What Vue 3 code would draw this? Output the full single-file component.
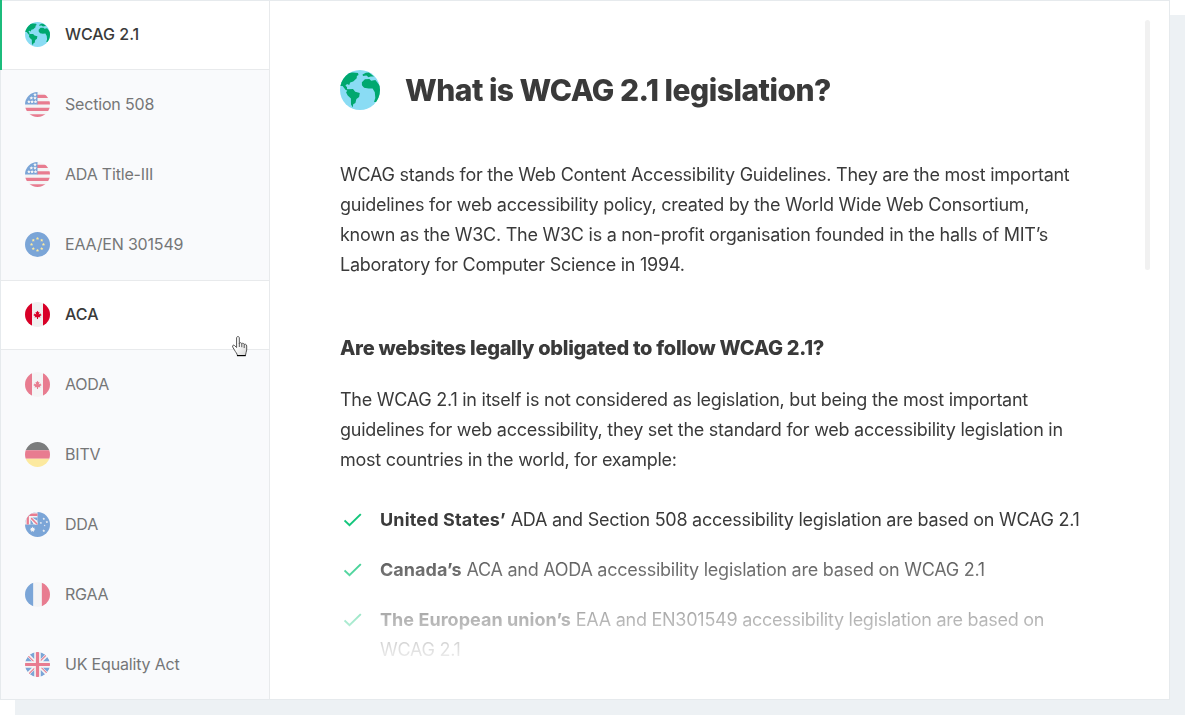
<script setup>
const items = [
  { label: 'WCAG 2.1', flag: 'globe', state: 'active' },
  { label: 'Section 508', flag: 'us' },
  { label: 'ADA Title-III', flag: 'us' },
  { label: 'EAA/EN 301549', flag: 'eu' },
  { label: 'ACA', flag: 'ca', state: 'hover' },
  { label: 'AODA', flag: 'ca' },
  { label: 'BITV', flag: 'de' },
  { label: 'DDA', flag: 'au' },
  { label: 'RGAA', flag: 'fr' },
  { label: 'UK Equality Act', flag: 'uk' }
]

const examples = [
  { who: 'United States’', text: 'ADA and Section 508 accessibility legislation are based on WCAG 2.1' },
  { who: 'Canada’s', text: 'ACA and AODA accessibility legislation are based on WCAG 2.1' },
  { who: 'The European union’s', text: 'EAA and EN301549 accessibility legislation are based on WCAG 2.1' }
]

const euStars = Array.from({ length: 8 }, (_, i) => [
  256 + 122 * Math.sin((i * Math.PI) / 4),
  256 - 122 * Math.cos((i * Math.PI) / 4)
])
const usStars = [[205, 55], [130, 125], [205, 125], [80, 200], [145, 200], [215, 200]]
const auStars = [[384, 140, 28], [325, 225, 26], [448, 205, 28], [402, 278, 20], [384, 385, 30]]

function star(cx, cy, r) {
  return Array.from({ length: 10 }, (_, i) => {
    const d = i % 2 ? r * 0.5 : r
    return `${cx + d * Math.sin((i * Math.PI) / 5)},${cy - d * Math.cos((i * Math.PI) / 5)}`
  }).join(' ')
}
</script>

<template>
  <div class="stage">
    <div class="card">
      <nav class="sidebar">
        <a v-for="item in items" :key="item.label" class="item" :class="item.state">
          <svg class="flag" viewBox="0 0 512 512">
            <use v-if="item.flag === 'globe'" href="#globe" />
            <g v-else-if="item.flag === 'us'">
              <path fill="#f0f0f0" d="M0 0h512v512H0z" />
              <path fill="#d80027" d="M244 55h268v67H244zM244 189h268v67H244zM0 323h512v67H0zM0 456h512v56H0z" />
              <path fill="#0052b4" d="M0 0h256v256H0z" />
              <polygon v-for="s in usStars" :key="s.join()" fill="#f0f0f0" :points="star(s[0], s[1], 38)" />
            </g>
            <g v-else-if="item.flag === 'eu'">
              <path fill="#0052b4" d="M0 0h512v512H0z" />
              <polygon v-for="s in euStars" :key="s.join()" fill="#ffda44" :points="star(s[0], s[1], 34)" />
            </g>
            <g v-else-if="item.flag === 'ca'">
              <path fill="#f0f0f0" d="M0 0h512v512H0z" />
              <path fill="#d80027" d="M0 0h144v512H0zM368 0h144v512H368zM301 290l44-23-22-11v-22l-45 22 22-45h-22l-22-33-22 33h-23l23 45-45-22v22l-22 11 44 23-22 22h56v34h22v-34h56z" />
            </g>
            <g v-else-if="item.flag === 'de'">
              <path d="M0 0h512v167H0z" />
              <path fill="#d80027" d="M0 167h512v178H0z" />
              <path fill="#ffda44" d="M0 345h512v167H0z" />
            </g>
            <g v-else-if="item.flag === 'au'">
              <path fill="#0052b4" d="M0 0h512v512H0z" />
              <path fill="#f0f0f0" d="M0 0h256v256H0z" />
              <path fill="#d80027" d="M33 33h223v47H80v176H33z" />
              <path fill="#0052b4" d="M142 112h114v66zM112 142v114h66z" />
              <path fill="#f0f0f0" d="M105 105h42l109 109v42h-42L105 147z" />
              <path fill="#d80027" d="M120 120h22l114 114v22h-22L120 142z" />
              <path fill="#f0f0f0" d="M155 299l14 29 32-7-14 29 25 20-31 7v33l-26-20-26 20v-33l-31-7 25-20-14-29 32 7z" />
              <polygon v-for="s in auStars" :key="s.join()" fill="#f0f0f0" :points="star(s[0], s[1], s[2])" />
            </g>
            <g v-else-if="item.flag === 'fr'">
              <path fill="#f0f0f0" d="M0 0h512v512H0z" />
              <path fill="#d80027" d="M345 0h167v512H345z" />
              <path fill="#0052b4" d="M0 0h167v512H0z" />
            </g>
            <g v-else>
              <path fill="#f0f0f0" d="M0 0h512v512H0z" />
              <path fill="#0052b4" d="M53 100L0 189h142zM459 100l53 89H370zM53 412L0 323h142zM459 412l53-89H370zM100 53l89-53v142zM412 53L323 0v142zM100 459l89 53V370zM412 459l-89 53V370z" />
              <path fill="#d80027" d="M0 223h223V0h66v223h223v66H289v223h-66V289H0z" />
              <path fill="#d80027" d="M323 323l114 114 15-16-98-98zM189 323L75 437l16 15 98-98zM189 189L75 75 60 91l98 98zM323 189L437 75l-16-15-98 98z" />
            </g>
          </svg>
          <span>{{ item.label }}</span>
        </a>
      </nav>

      <main class="content">
        <header class="title">
          <svg class="globe" viewBox="0 0 40 40">
            <g id="globe-large">
              <rect width="40" height="40" fill="#8adcf4" />
              <path fill="#00a86f" d="M0 13C3 6 8 2 13 2.5l5 .4.5 2-1.6 1-.2 2.4-3.5 3.1-3 1-1 2.7-2.2-1.1-1.6 1.7 1.6 1.2v2l2.4.8-.4 1.4-3.3-1-3.1-4L0 16zM22.5 4.6l3.4-1.8 3.1-.2 5 3.8-3.4.2-2 .6-2.2-1.6-3.4.3zM8 19.2l5-.1 2.2 2.6 4.6 1.2-.7 4-2.7 2-1 4.2-2.2 1.1-.4 3.2-1.8-3-.1-6-3.2-2.9-1.6-3.1zM21.9 12.2l3-3 4.5-.2 1.8 1.8 4.2-.7L40 16v16h-6l1.3-4-.5-5.8-2.2-3.8-4 .2-4.5-.8-2.2-2.6z" />
            </g>
            <defs>
              <g id="globe" transform="scale(12.8)">
                <use href="#globe-large" />
              </g>
            </defs>
          </svg>
          <h1>What is WCAG 2.1 legislation?</h1>
        </header>
        <p class="intro">WCAG stands for the Web Content Accessibility Guidelines. They are the most important<br />guidelines for web accessibility policy, created by the World Wide Web Consortium,<br />known as the W3C. The W3C is a non-profit organisation founded in the halls of MIT’s<br />Laboratory for Computer Science in 1994.</p>
        <h2>Are websites legally obligated to follow WCAG 2.1?</h2>
        <p>The WCAG 2.1 in itself is not considered as legislation, but being the most important<br />guidelines for web accessibility, they set the standard for web accessibility legislation in<br />most countries in the world, for example:</p>
        <ul>
          <li v-for="e in examples" :key="e.who">
            <svg class="check" viewBox="0 0 18 14"><path d="M.5 7.4l5 4.8L16.8 1.1" /></svg>
            <div><b>{{ e.who }}</b> {{ e.text }}</div>
          </li>
        </ul>
      </main>
      <div class="scrollbar"></div>
    </div>

    <svg class="cursor" viewBox="0 0 16 21">
      <defs>
        <linearGradient id="hand" x1="0" y1="0" x2="1" y2="1">
          <stop offset=".4" stop-color="#fff" />
          <stop offset="1" stop-color="#d5d5d5" />
        </linearGradient>
      </defs>
      <path d="M4.6 11.5V2c0-2 2.7-2 2.7 0v5.5c.4-1.2 2.2-1 2.5.3.6-.9 2.2-.6 2.4.7.8-.7 2.5-.2 2.5 1.5V14c0 2-1.3 3.2-1.3 5.5H5.3c0-2-1.8-3.4-2.8-5.4L.8 11.2c-.9-1.8.8-2.7 1.8-1.6z" fill="url(#hand)" stroke="#555" />
      <path d="M7.3 7v4M9.8 8v3.2M12.2 8.6V12" stroke="#555" fill="none" />
      <path d="M5 19.6h8.7" stroke="#000" stroke-width="1.2" />
    </svg>
  </div>
</template>

<style>
body {
  margin: 0;
  background: #fff;
}
</style>

<style scoped>
.stage {
  position: relative;
  width: 1185px;
  height: 715px;
  overflow: hidden;
  font-family: Inter, sans-serif;
  color: #3a3a3a;
}
.card {
  position: relative;
  display: flex;
  box-sizing: border-box;
  width: 1170px;
  height: 700px;
  border: 1px solid #e6eaed;
  background: #fff;
  box-shadow: 15px 15px 0 #edf1f4;
}
.sidebar {
  box-sizing: border-box;
  width: 269px;
  flex: none;
  border-right: 1px solid #e8eaec;
  background: #f9fafc;
}
.item {
  display: flex;
  align-items: center;
  box-sizing: border-box;
  height: 70px;
  padding: 0 0 3px 24px;
  gap: 15px;
  font-size: 16px;
  line-height: 24px;
  letter-spacing: -0.18px;
  color: #757677;
}
.item span {
  margin-top: -1px;
}
.item.active,
.item.hover {
  background: #fff;
  color: #3a3a3a;
  font-weight: 500;
  letter-spacing: 0;
}
.item.active {
  position: relative;
  height: 69px;
  padding-bottom: 1px;
  border-bottom: 1px solid #e8eaec;
}
.item.active + .item,
.item.hover + .item {
  height: 71px;
  padding-bottom: 2px;
}
.item.active::before {
  content: '';
  position: absolute;
  left: -1px;
  top: -1px;
  width: 2px;
  height: 70px;
  background: #1cbc7c;
}
.item.hover {
  margin-top: -1px;
  padding-bottom: 1px;
  border-top: 1px solid #e8eaec;
  border-bottom: 1px solid #e8eaec;
}
.item:last-child {
  height: 69px;
  padding-bottom: 2px;
}
.flag {
  width: 25px;
  height: 25px;
  flex: none;
  border-radius: 50%;
  opacity: 0.5;
}
.active .flag,
.hover .flag {
  opacity: 1;
}
.content {
  box-sizing: border-box;
  height: 670px;
  flex: 1;
  overflow: hidden;
  padding: 69px 75px 0 70px;
  font-size: 18px;
  line-height: 30px;
  letter-spacing: -0.26px;
  -webkit-mask-image: linear-gradient(#000 535px, transparent 670px);
  mask-image: linear-gradient(#000 535px, transparent 670px);
}
.title {
  display: flex;
  align-items: center;
  gap: 25px;
  height: 40px;
  margin-bottom: 50px;
}
.globe {
  width: 40px;
  height: 40px;
  border-radius: 50%;
}
h1,
h2,
p,
ul {
  margin: 0;
  white-space: nowrap;
}
h1 {
  font-size: 30px;
  line-height: 40px;
  font-weight: 800;
  letter-spacing: -0.52px;
}
h2 {
  margin: 53px 0 22px;
  font-size: 20px;
  line-height: 30px;
  font-weight: 800;
  letter-spacing: -0.29px;
}
ul {
  padding: 0;
  margin-top: 30px;
  list-style: none;
}
li {
  display: flex;
  margin-bottom: 20px;
}
li div {
  width: 712px;
  white-space: normal;
}
b {
  font-weight: 700;
  letter-spacing: 0.05px;
}
li:first-child b {
  letter-spacing: 0.15px;
}
.check {
  width: 18px;
  height: 14px;
  flex: none;
  margin: 8px 18px 0 4px;
  fill: none;
  stroke: #14c67c;
  stroke-width: 2;
}
.scrollbar {
  position: absolute;
  left: 1144px;
  top: 19px;
  width: 5px;
  height: 250px;
  border-radius: 3px;
  background: #f1f1f1;
}
.cursor {
  position: absolute;
  left: 232px;
  top: 336px;
  width: 16px;
  height: 21px;
}
</style>
